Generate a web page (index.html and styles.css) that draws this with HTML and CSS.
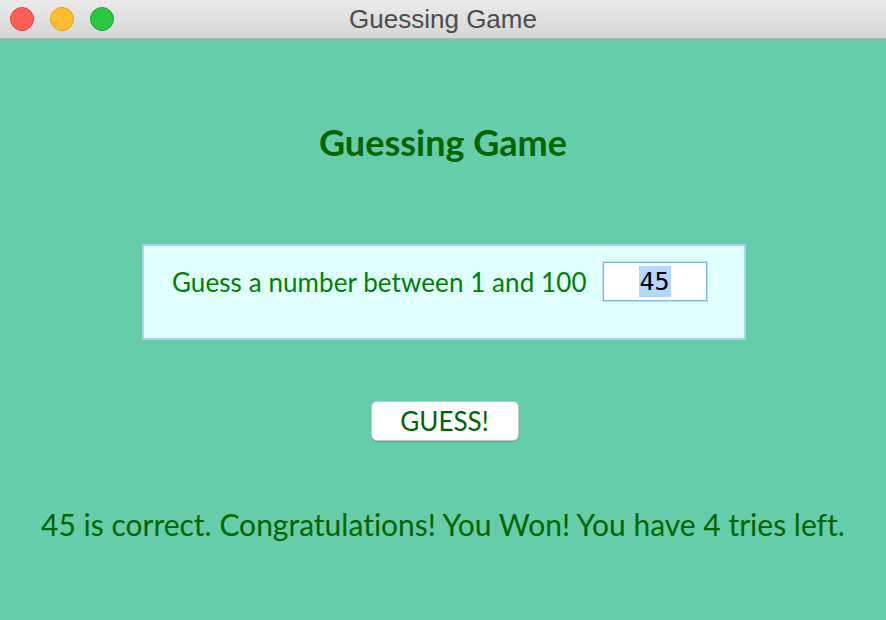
FILE: index.html
```html
<!DOCTYPE html>
<html>
<head>
<meta charset="utf-8">
<link rel="stylesheet" href="styles.css">
</head>
<body>
<div class="window">
  <div class="titlebar">
    <div class="lights">
      <span class="light red"></span>
      <span class="light yellow"></span>
      <span class="light green"></span>
    </div>
    <div class="wtitle">Guessing Game</div>
  </div>
  <div class="content">
    <h1 class="heading">Guessing Game</h1>
    <div class="panel">
      <span class="label">Guess a number between 1 and 100</span>
      <div class="field"><span class="sel">45</span></div>
    </div>
    <button class="guess">GUESS!</button>
    <p class="message">45 is correct. Congratulations! You Won! You have 4 tries left.</p>
  </div>
</div>
</body>
</html>
```
FILE: styles.css
```css
html, body {
  margin: 0;
  padding: 0;
}
body {
  width: 886px;
  height: 620px;
  overflow: hidden;
  background: #66cdaa;
  font-family: Lato, "Liberation Sans", sans-serif;
  font-variant-ligatures: none;
}
.window {
  display: flex;
  flex-direction: column;
  height: 620px;
}
.titlebar {
  position: relative;
  height: 38px;
  background: linear-gradient(#ebebeb, #d5d5d5);
  border-bottom: 1px solid #b4b4b4;
  display: flex;
  align-items: center;
  justify-content: center;
}
.lights {
  position: absolute;
  left: 10px;
  top: 7px;
  display: flex;
  gap: 16px;
}
.light {
  width: 24px;
  height: 24px;
  border-radius: 50%;
  box-sizing: border-box;
}
.red { background: #ff5f57; border: 1px solid #e2463f; }
.yellow { background: #febc2e; border: 1px solid #e1a116; }
.green { background: #28c840; border: 1px solid #14ae2c; }
.wtitle {
  font-family: "Helvetica Neue", "Liberation Sans", Arial, sans-serif;
  font-size: 26px;
  color: #4d4d4d;
  margin-top: 1px;
}
.content {
  display: flex;
  flex-direction: column;
  align-items: center;
}
.heading {
  margin: 81px 0 0;
  font-size: 36px;
  font-weight: 700;
  color: #006400;
  line-height: 44px;
}
.panel {
  margin: 80px 0 0 2px;
  width: 604px;
  height: 96px;
  box-sizing: border-box;
  background: #e0ffff;
  border: 2px solid #a8d4f0;
  display: flex;
  align-items: flex-start;
  padding: 16px 0 0 28px;
  gap: 16px;
}
.label {
  font-size: 26px;
  color: #008000;
  line-height: 40px;
  letter-spacing: 0.08px;
}
.field {
  width: 104px;
  height: 39px;
  box-sizing: border-box;
  background: #fff;
  border: 1px solid #7fb3e6;
  box-shadow: 0 0 0 1px #c5dcf3;
  display: flex;
  align-items: center;
  justify-content: center;
}
.sel {
  font-family: "DejaVu Sans Mono", monospace;
  font-size: 25px;
  background: #b3d7ff;
  color: #000;
  line-height: 31px;
  padding: 0 1px;
}
.guess {
  margin: 61px 0 0 3px;
  width: 148px;
  height: 40px;
  background: #fff;
  border: 1px solid #c8c8c8;
  border-radius: 6px;
  box-shadow: 0 1px 1px rgba(0,0,0,0.2);
  font-family: Lato, sans-serif;
  font-size: 26px;
  color: #006400;
  padding: 0;
}
.message {
  margin: 63px 0 0;
  font-size: 30px;
  color: #006400;
  line-height: 40px;
}
```
